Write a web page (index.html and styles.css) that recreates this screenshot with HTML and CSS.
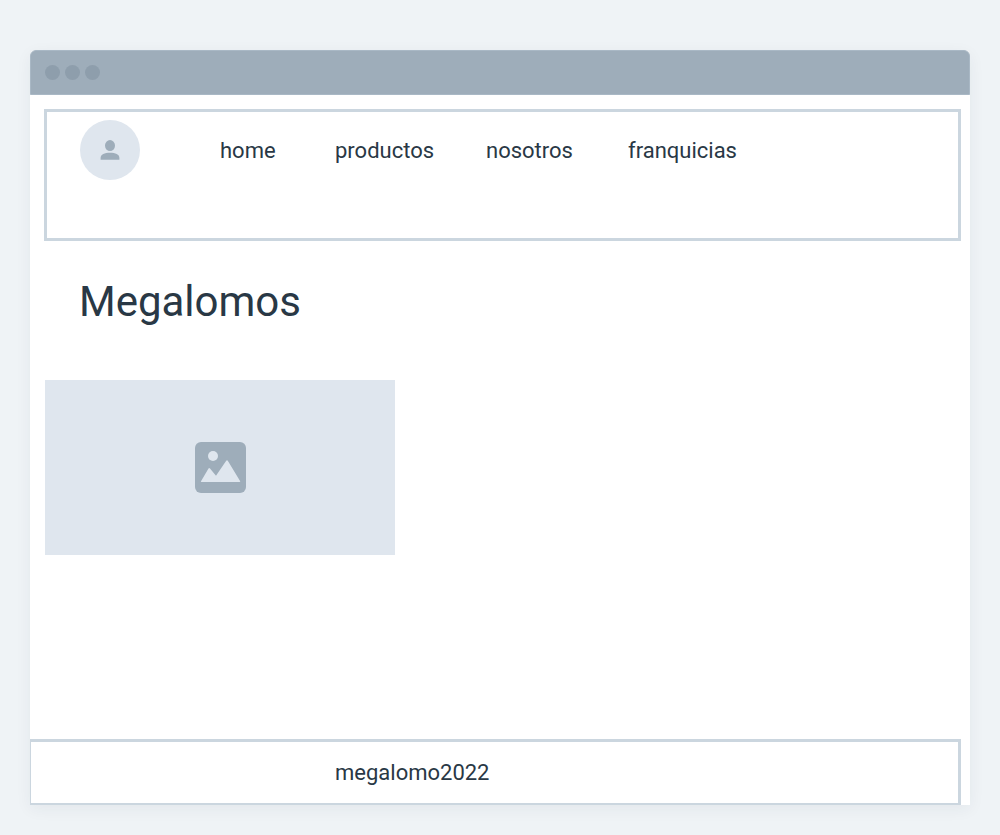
FILE: index.html
```html
<!DOCTYPE html>
<html lang="es">
<head>
<meta charset="utf-8">
<meta name="viewport" content="width=device-width, initial-scale=1">
<title>Megalomos</title>
<link rel="stylesheet" href="styles.css">
</head>
<body>
<div class="window">
  <div class="titlebar">
    <span class="dot"></span><span class="dot"></span><span class="dot"></span>
  </div>
  <header class="header">
    <div class="avatar">
      <svg class="avatar-icon" viewBox="0 0 20 20" aria-hidden="true">
        <ellipse cx="10" cy="5.600" rx="5" ry="5.500"/>
        <path d="M.6 19.800V18c0-3.600 4-5.200 9.400-5.200s9.400 1.600 9.400 5.200v1.800z"/>
      </svg>
    </div>
    <nav class="nav">
      <a href="#home">home</a>
      <a href="#productos">productos</a>
      <a href="#nosotros">nosotros</a>
      <a href="#franquicias">franquicias</a>
    </nav>
  </header>
  <main class="content">
    <h1 class="title">Megalomos</h1>
    <div class="image">
      <svg class="image-icon" viewBox="0 0 51 51" aria-hidden="true">
        <rect class="icon-frame" width="51" height="51" rx="6"/>
        <circle class="icon-scene" cx="18" cy="14" r="5"/>
        <path class="icon-scene" d="M6 39.200 13.500 26.500Q14.200 25.500 15 26.500L21 33.700 31.200 18.700Q32 17.700 32.800 18.700L45.200 39.200Q45.500 40 44.500 40H6.500Q5.500 40 6 39.200z"/>
      </svg>
    </div>
  </main>
  <footer class="footer">megalomo2022</footer>
</div>
</body>
</html>
```
FILE: styles.css
```css
* {
  box-sizing: border-box;
}

body {
  margin: 0;
  min-height: 100vh;
  padding: 50px 30px 30px;
  display: flex;
  background: #eff3f6;
  color: #293845;
  font-family: Roboto, "Liberation Sans", sans-serif;
}

.window {
  flex: 1;
  display: flex;
  flex-direction: column;
  background: #fff;
  border-radius: 6px 6px 0 0;
  box-shadow: 0 4px 16px rgba(41, 56, 69, 0.06);
}

.titlebar {
  display: flex;
  align-items: center;
  gap: 5px;
  height: 45px;
  padding: 0 14px;
  background: #9eadba;
  border: 1px solid #a9b8c5;
  border-radius: 6px 6px 0 0;
}

.dot {
  width: 15px;
  height: 15px;
  border-radius: 50%;
  background: #8e9eac;
}

.header {
  display: flex;
  align-items: flex-start;
  gap: 80px;
  min-height: 132px;
  margin: 14px 9px 0 14px;
  padding: 8px 33px;
  border: 3px solid #cbd6df;
}

.avatar {
  display: flex;
  align-items: center;
  justify-content: center;
  width: 60px;
  height: 60px;
  border-radius: 50%;
  background: #dfe6ee;
}

.avatar-icon {
  width: 20px;
  height: 20px;
  fill: #9eadba;
}

.nav {
  display: grid;
  grid-template-columns: 115px 151px 142px auto;
  align-items: center;
  height: 60px;
  font-size: 22px;
}

.nav a {
  color: inherit;
  text-decoration: none;
}

.content {
  flex: 1;
  padding: 33px 15px;
}

.title {
  margin: 0 0 50px;
  padding-left: 34px;
  font-size: 42px;
  font-weight: 400;
  line-height: 56px;
}

.image {
  display: flex;
  align-items: center;
  justify-content: center;
  width: 350px;
  max-width: 100%;
  height: 175px;
  background: #dfe6ee;
}

.image-icon {
  width: 51px;
  height: 51px;
}

.icon-frame {
  fill: #9eadba;
}

.icon-scene {
  fill: #dfe6ee;
}

.footer {
  margin-right: 9px;
  padding: 15px 304px 14px;
  border: 3px solid #cbd6df;
  border-width: 3px 3px 2px 1px;
  font-size: 22px;
  line-height: 32px;
}
```
